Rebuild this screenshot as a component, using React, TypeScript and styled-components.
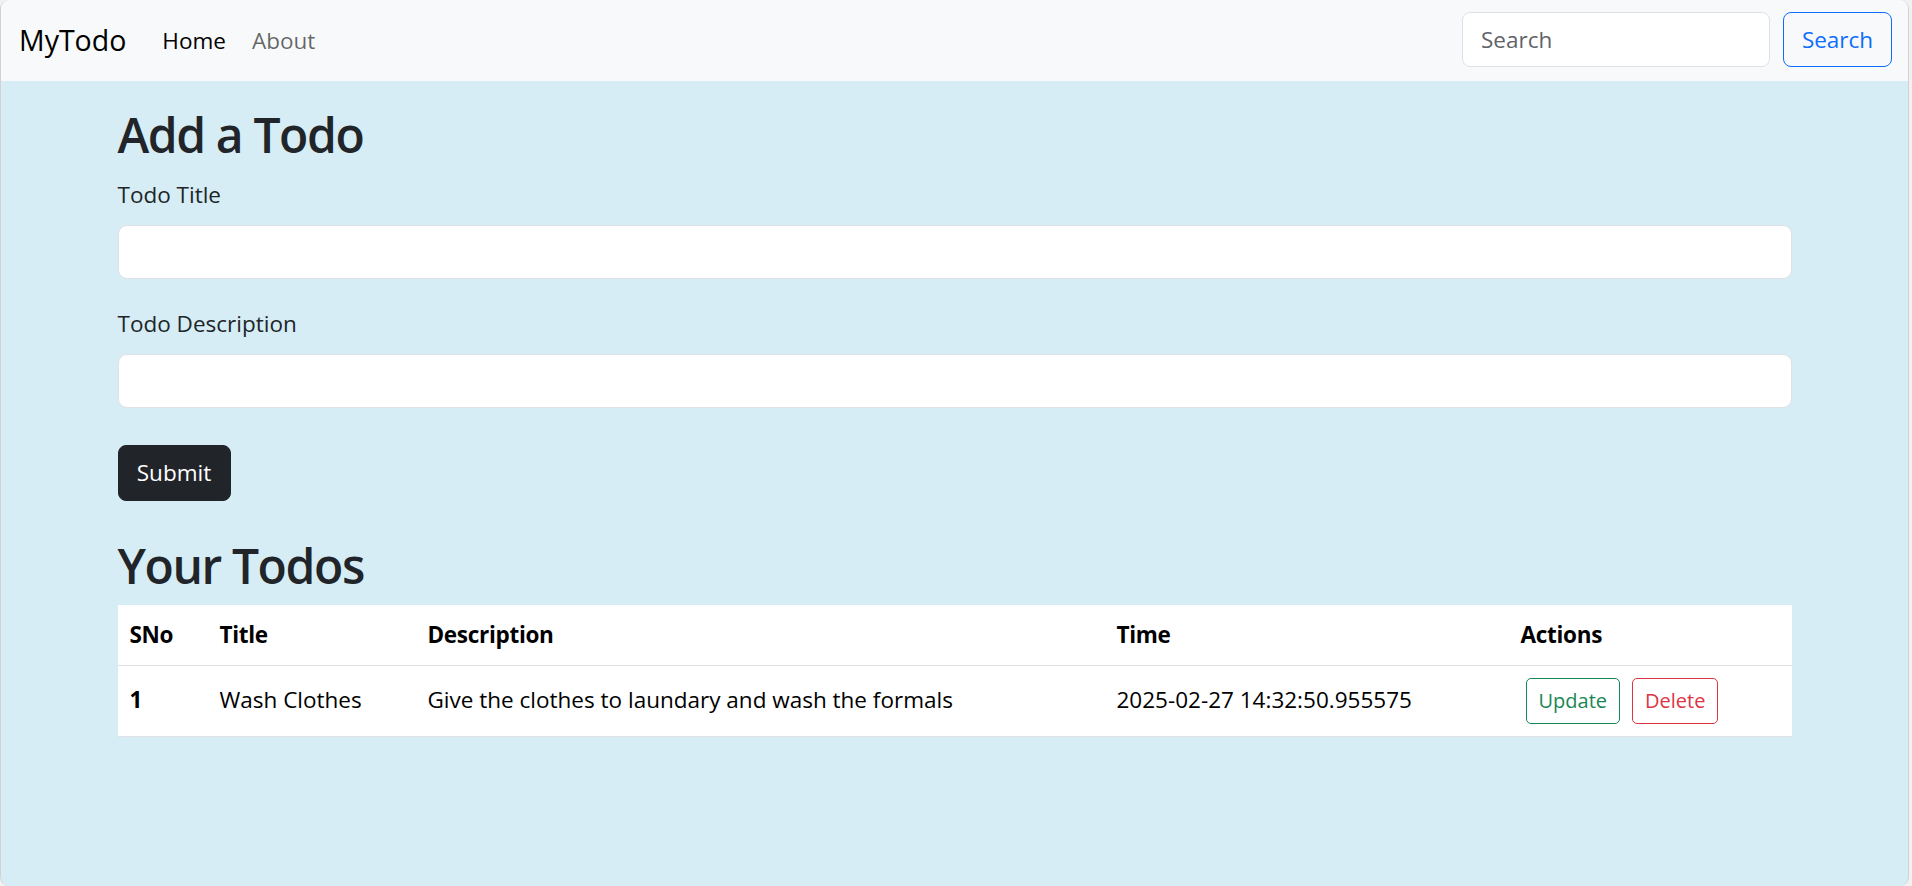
import React from 'react';
import styled, { createGlobalStyle } from 'styled-components';

const GlobalStyle = createGlobalStyle`
  html, body {
    margin: 0;
    padding: 0;
    background: #f1f1f1;
  }
  body {
    font-family: 'Open Sans', 'Noto Sans', sans-serif;
    font-size: 22.5px;
    line-height: 1.5;
    color: #212529;
  }
  * {
    box-sizing: border-box;
  }
`;

const Frame = styled.div`
  width: 1909px;
  height: 886px;
  display: flex;
  flex-direction: column;
  border: 1px solid #d2d2d2;
  border-top: none;
  border-bottom: none;
  border-radius: 9px;
  overflow: hidden;
  background: #d6edf5;
`;

const Navbar = styled.nav`
  height: 81px;
  flex-shrink: 0;
  display: flex;
  align-items: center;
  justify-content: space-between;
  padding: 0 16px 3px 18px;
  background: #f8f9fa;
`;

const NavLeft = styled.div`
  display: flex;
  align-items: center;
`;

const Brand = styled.a`
  font-size: 28.5px;
  color: #000;
  text-decoration: none;
  margin-right: 36px;
  padding-top: 2px;
`;

const NavLink = styled.a<{ $active?: boolean }>`
  font-size: 22.5px;
  color: ${(p) => (p.$active ? '#000' : 'rgba(0, 0, 0, 0.6)')};
  text-decoration: none;
  margin-right: 26px;
  padding-top: 3px;
`;

const SearchForm = styled.form`
  display: flex;
  align-items: center;
  gap: 13px;
`;

const SearchInput = styled.input`
  width: 308px;
  height: 55px;
  padding: 0 18px;
  font-family: inherit;
  font-size: 22.5px;
  color: #212529;
  background: #fff;
  border: 1px solid #dee2e6;
  border-radius: 8px;
  outline: none;
  &::placeholder {
    color: #5f6368;
  }
`;

const OutlineButton = styled.button<{ $tone: string }>`
  font-family: inherit;
  background: transparent;
  color: ${(p) => p.$tone};
  border: 1px solid ${(p) => p.$tone};
  cursor: pointer;
`;

const SearchButton = styled(OutlineButton)`
  width: 109px;
  height: 55px;
  font-size: 22.5px;
  border-radius: 8px;
  padding: 0;
`;

const Main = styled.main`
  flex: 1;
  width: 1674px;
  margin: 0 auto;
  padding-top: 25px;
`;

const Heading = styled.h1`
  margin: 0;
  font-size: 48px;
  font-weight: 600;
  line-height: 1.2;
  letter-spacing: -1.4px;
  color: #212529;
`;

const Field = styled.div`
  display: flex;
  flex-direction: column;
  gap: 14px;
  margin-bottom: 28px;
`;

const Label = styled.label`
  font-size: 22.5px;
  line-height: 33px;
`;

const TextInput = styled.input`
  width: 100%;
  height: 54px;
  background: #fff;
  border: 1px solid #dee2e6;
  border-radius: 9px;
  font-family: inherit;
  font-size: 22.5px;
  padding: 0 18px;
  outline: none;
`;

const Form = styled.form`
  padding-top: 14px;
`;

const SubmitButton = styled.button`
  width: 113px;
  height: 56px;
  margin-top: 9px;
  margin-bottom: 36px;
  background: #212529;
  color: #fff;
  border: 1px solid #212529;
  border-radius: 8px;
  font-family: inherit;
  font-size: 22.5px;
  padding: 0;
  cursor: pointer;
`;

const Table = styled.table`
  width: 100%;
  margin-top: 11px;
  border-collapse: collapse;
  table-layout: fixed;
  background: #fff;
  color: #000;
  font-size: 22.5px;
`;

const HeadRow = styled.tr`
  height: 60px;
  border-bottom: 1px solid #dee2e6;
`;

const BodyRow = styled.tr`
  height: 71px;
  border-bottom: 1px solid #dee2e6;
`;

const Th = styled.th<{ $w: number }>`
  width: ${(p) => p.$w}px;
  text-align: left;
  font-weight: 700;
  padding: 0 12px;
  vertical-align: middle;
  letter-spacing: -0.3px;
`;

const Td = styled.td<{ $bold?: boolean; $top?: number }>`
  padding: ${(p) => p.$top ?? 17}px 12px 0;
  vertical-align: top;
  line-height: 33px;
  font-weight: ${(p) => (p.$bold ? 700 : 400)};
  white-space: nowrap;
`;

const Actions = styled.div`
  display: flex;
  gap: 12px;
  margin-left: 5px;
`;

const SmallButton = styled(OutlineButton)`
  height: 46px;
  padding: 0 12px;
  font-size: 20px;
  border-radius: 5px;
`;

const columns = [
  { label: 'SNo', w: 90 },
  { label: 'Title', w: 208 },
  { label: 'Description', w: 689 },
  { label: 'Time', w: 404 },
  { label: 'Actions', w: 283 },
];

const todos = [
  {
    sno: 1,
    title: 'Wash Clothes',
    desc: 'Give the clothes to laundary and wash the formals',
    time: '2025-02-27 14:32:50.955575',
  },
];

const App = () => (
  <>
    <GlobalStyle />
    <Frame>
      <Navbar>
        <NavLeft>
          <Brand href="#">MyTodo</Brand>
          <NavLink href="#" $active>Home</NavLink>
          <NavLink href="#">About</NavLink>
        </NavLeft>
        <SearchForm onSubmit={(e) => e.preventDefault()}>
          <SearchInput type="search" placeholder="Search" />
          <SearchButton type="submit" $tone="#0d6efd">Search</SearchButton>
        </SearchForm>
      </Navbar>
      <Main>
        <Heading>Add a Todo</Heading>
        <Form onSubmit={(e) => e.preventDefault()}>
          <Field>
            <Label htmlFor="title">Todo Title</Label>
            <TextInput id="title" type="text" />
          </Field>
          <Field>
            <Label htmlFor="desc">Todo Description</Label>
            <TextInput id="desc" type="text" />
          </Field>
          <SubmitButton type="submit">Submit</SubmitButton>
        </Form>
        <Heading>Your Todos</Heading>
        <Table>
          <thead>
            <HeadRow>
              {columns.map((c) => (
                <Th key={c.label} $w={c.w}>{c.label}</Th>
              ))}
            </HeadRow>
          </thead>
          <tbody>
            {todos.map((t) => (
              <BodyRow key={t.sno}>
                <Td $bold>{t.sno}</Td>
                <Td>{t.title}</Td>
                <Td>{t.desc}</Td>
                <Td>{t.time}</Td>
                <Td $top={12}>
                  <Actions>
                    <SmallButton $tone="#198754">Update</SmallButton>
                    <SmallButton $tone="#dc3545">Delete</SmallButton>
                  </Actions>
                </Td>
              </BodyRow>
            ))}
          </tbody>
        </Table>
      </Main>
    </Frame>
  </>
);

export default App;
